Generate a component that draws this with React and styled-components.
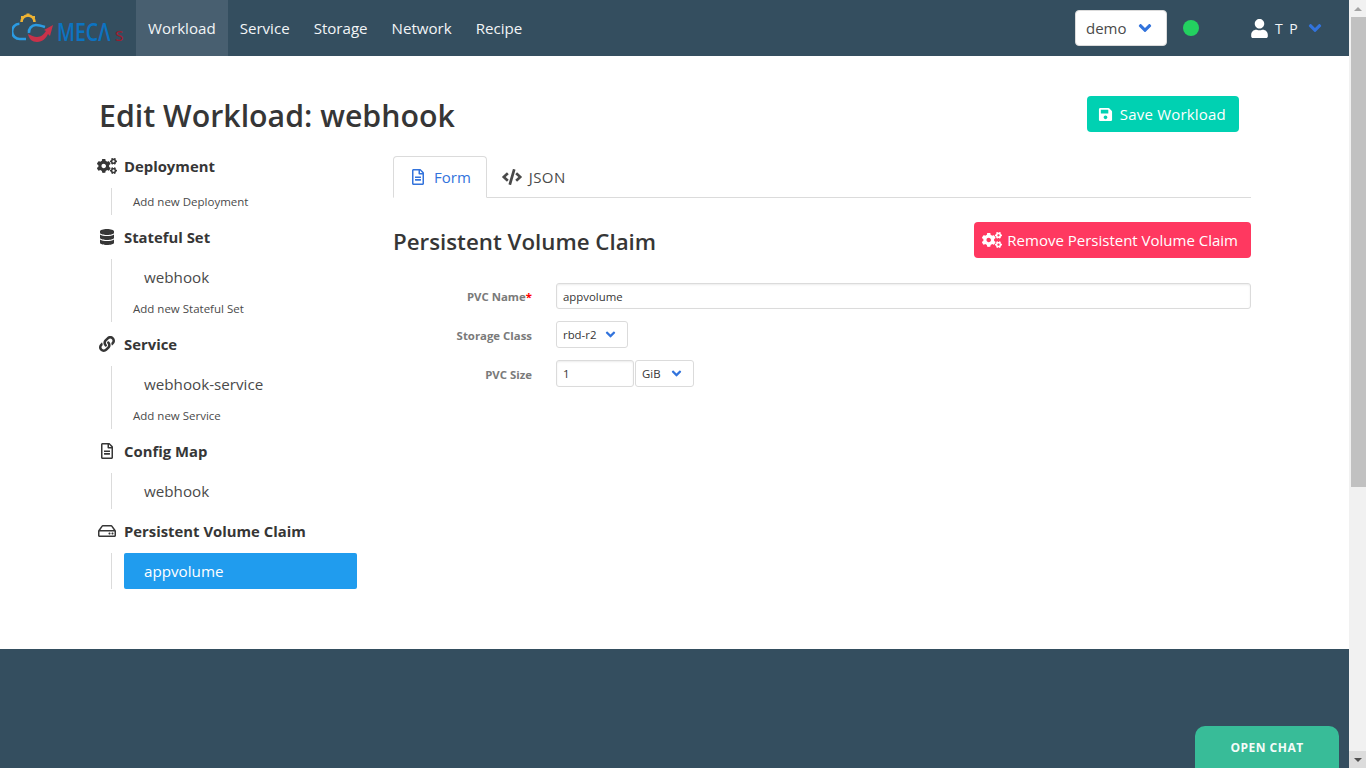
import React from 'react';
import styled, { createGlobalStyle } from 'styled-components';
import {
  FaCogs,
  FaDatabase,
  FaLink,
  FaRegFileAlt,
  FaRegHdd,
  FaSave,
  FaUser,
  FaCode,
  FaAngleDown,
} from 'react-icons/fa';

const GlobalStyle = createGlobalStyle`
  body {
    margin: 0;
    background: #fff;
    color: #363636;
    font-family: "Open Sans", "Noto Sans", sans-serif;
    font-size: 15px;
  }
  * {
    box-sizing: border-box;
  }
`;

const Page = styled.div`
  margin-right: 17px;
`;

const Navbar = styled.nav`
  display: flex;
  align-items: stretch;
  height: 56px;
  background: #344e5f;
  color: #fff;
`;

const Brand = styled.div`
  display: flex;
  align-items: center;
  width: 136px;
  padding-left: 12px;
`;

const NavItem = styled.a`
  display: flex;
  align-items: center;
  padding: 0 12px;
  font-size: 15.1px;
  color: #f2f5f7;
  background: ${(p) => (p.$active ? '#485f70' : 'transparent')};
`;

const NavEnd = styled.div`
  display: flex;
  align-items: center;
  margin-left: auto;
  padding-right: 24.5px;
`;

const ProjectSelect = styled.div`
  display: flex;
  align-items: center;
  justify-content: space-between;
  width: 92px;
  height: 36px;
  padding: 0 11px 0 10px;
  background: #fff;
  border: 1px solid #dbdbdb;
  border-radius: 4px;
  color: #4a4a4a;
  font-size: 15px;
`;

const StatusDot = styled.span`
  width: 16px;
  height: 16px;
  margin: 0 51px 0 16px;
  border-radius: 50%;
  background: #23d160;
`;

const UserName = styled.span`
  margin: 0 7.5px 0 6px;
  width: 22px;
  font-size: 14px;
  letter-spacing: 1.4px;
  white-space: nowrap;
  color: #f2f5f7;
`;

const Chevron = styled(FaAngleDown)`
  display: block;
  flex: none;
  width: ${(p) => p.$size || 20}px;
  height: ${(p) => p.$size || 20}px;
  color: #3273dc;
`;

const Main = styled.main`
  padding: 40px 98px 58px 99px;
`;

const TitleRow = styled.div`
  display: flex;
  align-items: center;
  justify-content: space-between;
  height: 36px;
  padding-right: 12px;
  margin-bottom: 14px;
`;

const Title = styled.h1`
  margin: 0;
  padding-top: 2px;
  font-size: 30.3px;
  font-weight: 600;
  color: #363636;
`;

const ActionButton = styled.button`
  display: inline-flex;
  align-items: center;
  gap: ${(p) => p.$gap}px;
  height: 36px;
  padding: 0 13px 0 ${(p) => p.$left}px;
  border: 0;
  border-radius: 4px;
  background: ${(p) => p.$color};
  color: #fff;
  font: inherit;
  font-size: 15px;
  letter-spacing: ${(p) => p.$spacing || 0}px;

  svg {
    width: ${(p) => p.$iconSize}px;
    height: ${(p) => p.$iconSize}px;
  }
`;

const Columns = styled.div`
  display: grid;
  grid-template-columns: 258px 1fr;
  column-gap: 36px;
`;

const Group = styled.section`
  margin-bottom: 2px;
`;

const GroupHead = styled.div`
  display: flex;
  align-items: center;
  height: 42px;
  padding-bottom: 2px;
  margin-left: -2px;
  font-size: 14.85px;
  font-weight: 700;
  color: #363636;

  svg {
    flex: none;
    width: 20px;
    height: 16px;
    margin-right: 7px;
  }
`;

const GroupList = styled.ul`
  list-style: none;
  margin: 0 0 0 12px;
  padding: 0 0 0 12px;
  border-left: 1px solid #dbdbdb;
`;

const ItemLink = styled.li`
  display: flex;
  align-items: center;
  width: 233px;
  height: 36px;
  padding-left: 20px;
  border-radius: 2px;
  font-size: 15.2px;
  color: ${(p) => (p.$active ? '#fff' : '#4a4a4a')};
  background: ${(p) => (p.$active ? '#209cee' : 'transparent')};
`;

const AddLink = styled.li`
  display: flex;
  align-items: center;
  height: 27px;
  padding-left: 9px;
  font-size: 11.5px;
  color: #4a4a4a;
`;

const Tabs = styled.div`
  display: flex;
  height: 42px;
  margin-top: 10px;
  border-bottom: 1px solid #dbdbdb;
`;

const Tab = styled.a`
  display: flex;
  align-items: center;
  gap: 8px;
  height: 42px;
  padding: 0 15px 0 16px;
  font-size: 15px;
  color: ${(p) => (p.$active ? '#3273dc' : '#4a4a4a')};
  background: ${(p) => (p.$active ? '#fff' : 'transparent')};
  border: 1px solid ${(p) => (p.$active ? '#dbdbdb' : 'transparent')};
  border-bottom-color: ${(p) => (p.$active ? '#fff' : 'transparent')};
  border-radius: 4px 4px 0 0;

  svg {
    width: ${(p) => p.$iconSize || 16}px;
    height: 16px;
  }

  & + & {
    margin-left: -2px;
    gap: 7px;
    letter-spacing: 0.4px;
  }
`;

const SectionHead = styled.div`
  display: flex;
  align-items: center;
  justify-content: space-between;
  height: 36px;
  margin: 24px 0 25px;
`;

const SectionTitle = styled.h2`
  margin: 0;
  padding-top: 2px;
  font-size: 22.3px;
  font-weight: 600;
  color: #363636;
`;

const Field = styled.div`
  display: grid;
  grid-template-columns: 139px 1fr;
  column-gap: 24px;
  align-items: center;
  margin-bottom: 12px;
`;

const Label = styled.label`
  padding-top: 1px;
  text-align: right;
  font-size: 11.4px;
  font-weight: 700;
  color: #7a7a7a;
`;

const Required = styled.span`
  color: #ff0000;
`;

const FieldRow = styled.div`
  display: flex;
  gap: 1px;
`;

const TextBox = styled.div`
  display: flex;
  align-items: center;
  width: ${(p) => p.$width || '100%'};
  height: ${(p) => p.$height || 26}px;
  padding: 0 6px;
  background: #fff;
  border: 1px solid #dbdbdb;
  border-radius: 3px;
  box-shadow: inset 0 1px 2px rgba(10, 10, 10, 0.08);
  font-size: 11.4px;
  color: #363636;
`;

const SmallSelect = styled.div`
  display: flex;
  align-items: center;
  justify-content: space-between;
  width: ${(p) => p.$width}px;
  height: 27px;
  padding: 0 9px 0 6px;
  background: #fff;
  border: 1px solid #dbdbdb;
  border-radius: 3px;
  font-size: 11.4px;
  color: #363636;
`;

const Footer = styled.footer`
  height: 119px;
  background: #344e5f;
`;

// sits over the footer, stuck to the bottom of the window
const ChatButton = styled.div`
  position: fixed;
  right: 27px;
  bottom: 0;
  display: flex;
  align-items: center;
  justify-content: center;
  width: 144px;
  height: 42px;
  background: #38bc98;
  border-radius: 10px 10px 0 0;
  color: #f4fbf9;
  font-size: 12px;
  font-weight: 700;
  letter-spacing: 0.5px;
`;

// the window's scrollbar, lying over the right edge of the page
const ScrollBar = styled.div`
  position: fixed;
  top: 0;
  right: 0;
  bottom: 0;
  display: flex;
  flex-direction: column;
  width: 17px;
  background: #f1f1f1;
`;

const ScrollArrow = styled.div`
  display: flex;
  align-items: center;
  justify-content: center;
  height: 17px;
  background: ${(p) => (p.$down ? '#dcdcdc' : '#f1f1f1')};

  &::before {
    content: '';
    border-left: 4px solid transparent;
    border-right: 4px solid transparent;
    ${(p) =>
      p.$down
        ? 'border-top: 4px solid #505050;'
        : 'border-bottom: 4px solid #a3a3a3;'}
  }
`;

const ScrollThumb = styled.div`
  height: 470px;
  margin-left: 2px;
  background: #c1c1c1;
`;

const ScrollTrack = styled.div`
  flex: 1;
`;

const Logo = () => (
  <svg width="114" height="32" viewBox="0 0 114 32">
    {/* cloud */}
    <path d="M14 27H8a7.6 7.6 0 0 1-.6-15.2" fill="none" stroke="#2b9be3" strokeWidth="2.6" />
    {/* gear */}
    <path d="M9.5 10a6.5 6.5 0 0 1 13 0" fill="none" stroke="#eeb333" strokeWidth="2.6" />
    <rect x="14.5" y="1.5" width="3" height="3" fill="#eeb333" />
    <rect x="9" y="4" width="2.6" height="2.6" fill="#eeb333" />
    <rect x="20.4" y="4" width="2.6" height="2.6" fill="#eeb333" />
    {/* ring */}
    <path d="M17 21a7 7 0 0 1 7-8c3 0 6 1 9 2" fill="none" stroke="#2b9be3" strokeWidth="2.6" />
    {/* swoosh */}
    <path d="M16 22c1 5 4 8 9 8 6 0 9-4 11-8l2 2 3-11-9 5 2 1c-2 3-5 6-9 6-3 0-6-2-9-3z" fill="#c8324a" />
    {/* wordmark */}
    <text
      transform="translate(45 29) scale(0.78 1)"
      fontFamily="Open Sans, sans-serif"
      fontWeight="600"
      fontSize="25"
      fill="#0c73c2"
    >
      MECΛ
    </text>
    <text x="103" y="28.5" fontFamily="Open Sans, sans-serif" fontSize="18" fill="#9c1c2e">
      s
    </text>
  </svg>
);

const groups = [
  { title: 'Deployment', icon: <FaCogs />, items: [], add: 'Add new Deployment' },
  { title: 'Stateful Set', icon: <FaDatabase />, items: ['webhook'], add: 'Add new Stateful Set' },
  { title: 'Service', icon: <FaLink />, items: ['webhook-service'], add: 'Add new Service' },
  { title: 'Config Map', icon: <FaRegFileAlt />, items: ['webhook'] },
  { title: 'Persistent Volume Claim', icon: <FaRegHdd />, items: ['appvolume'], active: 'appvolume' },
];

export default function App() {
  return (
    <>
      <GlobalStyle />
      <Page>
        <Navbar>
          <Brand>
            <Logo />
          </Brand>
          <NavItem $active>Workload</NavItem>
          <NavItem>Service</NavItem>
          <NavItem>Storage</NavItem>
          <NavItem>Network</NavItem>
          <NavItem>Recipe</NavItem>
          <NavEnd>
            <ProjectSelect>
              demo
              <Chevron />
            </ProjectSelect>
            <StatusDot />
            <FaUser size={19} />
            <UserName>T P</UserName>
            <Chevron />
          </NavEnd>
        </Navbar>

        <Main>
          <TitleRow>
            <Title>Edit Workload: webhook</Title>
            <ActionButton $color="#00d1b2" $left={11} $gap={7} $iconSize={15} $spacing={0.2}>
              <FaSave />
              Save Workload
            </ActionButton>
          </TitleRow>

          <Columns>
            <aside>
              {groups.map((g) => (
                <Group key={g.title}>
                  <GroupHead>
                    {g.icon}
                    {g.title}
                  </GroupHead>
                  <GroupList>
                    {g.items.map((item) => (
                      <ItemLink key={item} $active={g.active === item}>
                        {item}
                      </ItemLink>
                    ))}
                    {g.add && <AddLink>{g.add}</AddLink>}
                  </GroupList>
                </Group>
              ))}
            </aside>

            <div>
              <Tabs>
                <Tab $active>
                  <FaRegFileAlt />
                  Form
                </Tab>
                <Tab $iconSize={20}>
                  <FaCode />
                  JSON
                </Tab>
              </Tabs>

              <SectionHead>
                <SectionTitle>Persistent Volume Claim</SectionTitle>
                <ActionButton $color="#ff3860" $left={8} $gap={5} $iconSize={20}>
                  <FaCogs />
                  Remove Persistent Volume Claim
                </ActionButton>
              </SectionHead>

              <Field>
                <Label>
                  PVC Name<Required>*</Required>
                </Label>
                <TextBox>appvolume</TextBox>
              </Field>
              <Field>
                <Label>Storage Class</Label>
                <FieldRow>
                  <SmallSelect $width={72}>
                    rbd-r2
                    <Chevron $size={15} />
                  </SmallSelect>
                </FieldRow>
              </Field>
              <Field>
                <Label>PVC Size</Label>
                <FieldRow>
                  <TextBox $width="78px" $height={27}>
                    1
                  </TextBox>
                  <SmallSelect $width={59}>
                    GiB
                    <Chevron $size={15} />
                  </SmallSelect>
                </FieldRow>
              </Field>
            </div>
          </Columns>
        </Main>

        <Footer />
      </Page>

      <ChatButton>OPEN CHAT</ChatButton>
      <ScrollBar>
        <ScrollArrow />
        <ScrollThumb />
        <ScrollTrack />
        <ScrollArrow $down />
      </ScrollBar>
    </>
  );
}
